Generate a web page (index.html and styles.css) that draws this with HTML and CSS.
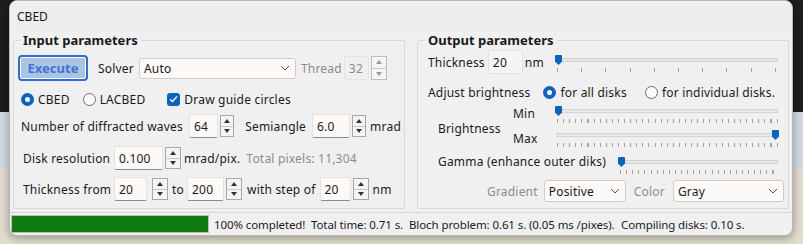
FILE: index.html
```html
<!DOCTYPE html>
<html lang="en">
<head>
    <meta charset="UTF-8">
    <title>CBED</title>
    <link rel="stylesheet" href="styles.css">
</head>
<body>
    <div class="window">
        <div class="titlebar">CBED</div>

        <div class="panes">
            <fieldset class="group input-group">
                <legend>Input parameters</legend>

                <div class="row row-exec">
                    <button class="execute">Execute</button>
                    <span class="label solver-label">Solver</span>
                    <div class="combo solver-combo"><span>Auto</span><svg class="chev" width="10" height="6" viewBox="0 0 10 6"><path d="M1 1l4 4 4-4" fill="none" stroke="#555" stroke-width="1"/></svg></div>
                    <span class="label muted thread-label">Thread</span>
                    <div class="field disabled w-thread">32</div>
                    <div class="spin spin-tall"><span class="up"></span><span class="down"></span></div>
                </div>

                <div class="row row-mode">
                    <span class="radio checked"></span><span class="label">CBED</span>
                    <span class="radio lacbed"></span><span class="label">LACBED</span>
                    <span class="check"><svg width="9" height="8" viewBox="0 0 9 8"><path d="M1 4.2l2.4 2.3L8 1.5" fill="none" stroke="#fff" stroke-width="1.3"/></svg></span><span class="label">Draw guide circles</span>
                </div>

                <div class="row row-waves">
                    <span class="label">Number of diffracted waves</span>
                    <div class="field w-waves">64</div>
                    <div class="spin"><span class="up"></span><span class="down"></span></div>
                    <span class="label semi-label">Semiangle</span>
                    <div class="field w-semi">6.0</div>
                    <div class="spin"><span class="up"></span><span class="down"></span></div>
                    <span class="label unit">mrad</span>
                </div>

                <div class="row row-res">
                    <span class="label res-label">Disk resolution</span>
                    <div class="field w-res">0.100</div>
                    <div class="spin"><span class="up"></span><span class="down"></span></div>
                    <span class="label unit">mrad/pix.</span>
                    <span class="label muted total">Total pixels: 11,304</span>
                </div>

                <div class="row row-thick">
                    <span class="label res-label">Thickness from</span>
                    <div class="field w-from">20</div>
                    <div class="spin"><span class="up"></span><span class="down"></span></div>
                    <span class="label to-label">to</span>
                    <div class="field w-to">200</div>
                    <div class="spin"><span class="up"></span><span class="down"></span></div>
                    <span class="label step-label">with step of</span>
                    <div class="field w-step">20</div>
                    <div class="spin"><span class="up"></span><span class="down"></span></div>
                    <span class="label unit">nm</span>
                </div>
            </fieldset>

            <fieldset class="group output-group">
                <legend>Output parameters</legend>

                <div class="row row-othick">
                    <span class="label">Thickness</span>
                    <div class="field w-othick">20</div>
                    <span class="label nm">nm</span>
                    <div class="slider coarse">
                        <div class="track"></div>
                        <div class="rail"><div class="thumb" style="left: 0%"></div></div>
                        <div class="ticks"></div>
                    </div>
                </div>

                <div class="row row-adjust">
                    <span class="label">Adjust brightness</span>
                    <span class="radio checked all"></span><span class="label">for all disks</span>
                    <span class="radio indiv"></span><span class="label">for individual disks.</span>
                </div>

                <div class="row-bright">
                    <span class="label bright-label">Brightness</span>
                    <span class="label min-label">Min</span>
                    <div class="slider fine">
                        <div class="track"></div>
                        <div class="rail"><div class="thumb" style="left: 0%"></div></div>
                        <div class="ticks"></div>
                    </div>
                    <span class="label max-label">Max</span>
                    <div class="slider fine">
                        <div class="track"></div>
                        <div class="rail"><div class="thumb" style="left: 100%"></div></div>
                        <div class="ticks"></div>
                    </div>
                </div>

                <div class="row row-gamma">
                    <span class="label">Gamma (enhance outer diks)</span>
                    <div class="slider fine gamma">
                        <div class="track"></div>
                        <div class="rail"><div class="thumb" style="left: 0%"></div></div>
                        <div class="ticks"></div>
                    </div>
                </div>

                <div class="row row-grad">
                    <span class="label muted">Gradient</span>
                    <div class="combo grad-combo"><span>Positive</span><svg class="chev" width="10" height="6" viewBox="0 0 10 6"><path d="M1 1l4 4 4-4" fill="none" stroke="#555" stroke-width="1"/></svg></div>
                    <span class="label muted color-label">Color</span>
                    <div class="combo color-combo"><span>Gray</span><svg class="chev" width="10" height="6" viewBox="0 0 10 6"><path d="M1 1l4 4 4-4" fill="none" stroke="#555" stroke-width="1"/></svg></div>
                </div>
            </fieldset>
        </div>

        <div class="statusbar">
            <div class="progress"><div class="progress-fill" style="width: 100%"></div></div>
            <span class="status-text st-done">100% completed!</span>
            <span class="status-text st-total">Total time: 0.71 s.</span>
            <span class="status-text st-bloch">Bloch problem: 0.61 s. (0.05 ms /pixes).</span>
            <span class="status-text">Compiling disks: 0.10 s.</span>
        </div>
    </div>
</body>
</html>
```

FILE: styles.css
```css
:root {
    --win-bg: #f0f0f0;
    --text: #1b1b1b;
    --muted: #8c8c8c;
    --accent: #0a64c4;
    --field-bg: #fcf9f6;
    --line: #d9d9d9;
}
* {
    box-sizing: border-box;
}
body {
    margin: 0;
    width: 803px;
    height: 244px;
    overflow: hidden;
    font-family: 'Noto Sans', 'Open Sans', sans-serif;
    font-size: 12px;
    letter-spacing: 0.2px;
    color: var(--text);
    background:
        linear-gradient(to bottom, #1d1d1d 0, #1d1d1d 112px, #d3dae4 112px, #d3dae4 170px, #e2dccf 170px);
}
.window {
    margin-left: 9px;
    width: 784px;
    height: 236px;
    background: var(--win-bg);
    border: 1px solid #b9b9b9;
    border-radius: 8px;
    box-shadow: 0 2px 8px rgba(0, 0, 0, 0.35);
    display: flex;
    flex-direction: column;
    overflow: hidden;
}
.titlebar {
    height: 30px;
    line-height: 31px;
    padding-left: 7px;
    font-size: 12px;
    letter-spacing: 0;
    background: #eeeeee;
}
.panes {
    display: flex;
    gap: 12px;
    padding: 0 3px;
}
.group {
    margin: 0;
    border: 1px solid var(--line);
    border-radius: 2px;
    padding: 0 3px;
    min-width: 0;
    height: 178px;
}
.group legend {
    font-weight: 700;
    font-size: 13px;
    letter-spacing: 0;
    line-height: 18px;
    padding: 0 3px;
    margin-left: 3px;
}
.input-group {
    width: 393px;
}
.output-group {
    width: 373px;
}
.output-group legend {
    margin-left: 4px;
}
.row {
    display: flex;
    align-items: center;
}
.label {
    white-space: nowrap;
}
.muted {
    color: var(--muted);
}

/* input fields and spinners */
.field {
    height: 24px;
    background: var(--field-bg);
    border: 1px solid #e4e1de;
    border-bottom-color: #8c8c8c;
    border-radius: 2px;
    padding-left: 4px;
    display: flex;
    align-items: center;
}
.field.disabled {
    color: var(--muted);
    background: transparent;
    border-color: #e4e4e4;
}
.spin {
    width: 16px;
    height: 22px;
    margin-left: 2px;
    border: 1px solid #a7a7a7;
    background: #f4f4f4;
    display: flex;
    flex-direction: column;
}
.spin span {
    flex: 1;
    display: flex;
    align-items: center;
    justify-content: center;
}
.spin .up {
    border-bottom: 1px solid #c8c8c8;
}
.spin .up::after, .spin .down::after {
    content: '';
    border-left: 3px solid transparent;
    border-right: 3px solid transparent;
}
.spin .up::after {
    border-bottom: 4px solid #333;
}
.spin .down::after {
    border-top: 4px solid #333;
}
.spin-tall {
    height: 24px;
    border-color: #bdbdbd;
}
.spin-tall .up::after {
    border-bottom-color: #9a9a9a;
}
.spin-tall .down::after {
    border-top-color: #9a9a9a;
}

/* combos */
.combo {
    height: 22px;
    background: var(--field-bg);
    border: 1px solid #cdcdcd;
    border-radius: 3px;
    display: flex;
    align-items: center;
    justify-content: space-between;
    padding: 0 5px 0 4px;
}

/* radios and checks */
.radio {
    width: 13px;
    height: 13px;
    border-radius: 50%;
    border: 1px solid #6e6e6e;
    background: #fafafa;
    flex: none;
    margin-right: 4px;
}
.radio.checked {
    border: 4px solid var(--accent);
    background: #fff;
}
.check {
    width: 13px;
    height: 13px;
    border-radius: 3px;
    background: var(--accent);
    display: flex;
    align-items: center;
    justify-content: center;
    margin: 0 4px 0 22px;
}

/* input group rows */
.row-exec {
    height: 26px;
    margin-top: 6px;
    margin-left: 1px;
}
.execute {
    width: 70px;
    height: 26px;
    border: 2px solid #2d6fd4;
    border-radius: 4px;
    box-shadow: inset 0 0 0 1px #fff;
    background: #adc3e2;
    color: #3f72d6;
    font-family: inherit;
    font-weight: 700;
    font-size: 13px;
    padding: 0;
}
.solver-label {
    margin-left: 10px;
}
.solver-combo {
    width: 157px;
    margin-left: 5px;
    height: 21px;
}
.thread-label {
    margin-left: 5px;
}
.w-thread {
    width: 25px;
    margin-left: 2px;
}
.row-mode {
    height: 22px;
    margin-top: 7px;
    padding-left: 4px;
}
.radio.lacbed {
    margin-left: 13px;
}
.row-waves {
    height: 24px;
    margin-top: 4px;
    padding-left: 4px;
}
.w-waves {
    width: 31px;
    margin-left: 6px;
}
.semi-label {
    margin-left: 11px;
}
.w-semi {
    width: 41px;
    margin-left: 6px;
}
.unit {
    margin-left: 4px;
}
.row-res {
    height: 24px;
    margin-top: 8px;
    padding-left: 6px;
}
.res-label {
    width: 91px;
}
.w-res {
    width: 49px;
}
.row-res .unit {
    margin-left: 3px;
}
.total {
    margin-left: 6px;
}
.row-thick {
    height: 24px;
    margin-top: 7px;
    padding-left: 6px;
}
.w-from {
    width: 33px;
}
.w-from + .spin {
    margin-left: 5px;
}
.to-label {
    margin-left: 4px;
}
.w-to {
    width: 37px;
    margin-left: 3px;
}
.step-label {
    margin-left: 5px;
}
.w-step {
    width: 31px;
    margin-left: 4px;
}

/* sliders */
.slider {
    position: relative;
    height: 18px;
}
.slider .track {
    position: absolute;
    top: 3px;
    left: 0;
    right: 0;
    height: 4px;
    background: #e6e6e6;
    border: 1px solid #d4d4d4;
}
.slider .rail {
    position: absolute;
    top: 0;
    left: -1px;
    right: 6px;
    height: 10px;
}
.slider .thumb {
    position: absolute;
    top: 0;
    width: 7px;
    height: 10px;
    background: var(--accent);
    clip-path: polygon(0 0, 100% 0, 100% 65%, 50% 100%, 0 65%);
    border-radius: 1px;
}
.slider .ticks {
    position: absolute;
    top: 13px;
    left: 1px;
    right: 0;
    height: 4px;
}
.coarse {
    width: 222px;
}
.coarse .ticks {
    background: repeating-linear-gradient(to right, #a3a3a3 0, #a3a3a3 1px, transparent 1px, transparent 24.2px);
}
.fine .ticks {
    background: repeating-linear-gradient(to right, #a3a3a3 0, #a3a3a3 1px, transparent 1px, transparent 6.1px);
}

/* output group rows */
.output-group .row {
    padding-left: 7px;
}
.row-othick {
    height: 24px;
    margin-top: 1px;
}
.w-othick {
    width: 35px;
    margin-left: 3px;
    border-bottom-color: #e4e1de;
    background: #f7f5f3;
}
.nm {
    margin-left: 2px;
}
.row-othick .slider {
    margin-left: auto;
    margin-right: 7px;
    align-self: flex-start;
    margin-top: 5px;
}
.row-adjust {
    height: 22px;
    margin-top: 7px;
}
.radio.all {
    margin-left: 13px;
}
.radio.indiv {
    margin-left: 18px;
}
.row-bright {
    display: grid;
    grid-template-columns: 1fr 43px 222px;
    grid-template-rows: 24px 24px;
    margin: 3px 7px 0 0;
    padding-left: 17px;
    line-height: 16px;
}
.bright-label {
    grid-row: 1 / 3;
    grid-column: 1;
    margin-top: 15px;
}
.min-label {
    grid-row: 1;
    grid-column: 2;
}
.max-label {
    grid-row: 2;
    grid-column: 2;
    margin-top: 1px;
}
.row-gamma {
    height: 20px;
    align-items: flex-start;
    line-height: 16px;
}
.output-group .row-gamma {
    padding-left: 17px;
}
.gamma {
    flex: 1;
    margin-left: 13px;
    margin-right: 7px;
    margin-top: 3px;
}
.row-grad {
    height: 22px;
    margin-top: 6px;
}
.output-group .row-grad {
    padding-left: 66px;
}
.grad-combo {
    width: 82px;
    margin-left: 6px;
}
.color-label {
    margin-left: 8px;
}
.color-combo {
    width: 111px;
    margin-left: 8px;
}

/* status bar */
.statusbar {
    margin-top: 3px;
    border-top: 1px solid #d8d8d8;
    height: 27px;
    display: flex;
    align-items: center;
    padding-left: 1px;
    font-size: 11.5px;
    letter-spacing: -0.1px;
}
.progress {
    width: 198px;
    height: 18px;
    border: 1px solid #bcbcbc;
    background: #e6e6e6;
    margin-right: 5px;
}
.progress-fill {
    height: 100%;
    background: #107c10;
}
.status-text {
    white-space: nowrap;
}
.st-done {
    width: 97px;
}
.st-total {
    width: 98px;
}
.st-bloch {
    width: 212px;
}
```
